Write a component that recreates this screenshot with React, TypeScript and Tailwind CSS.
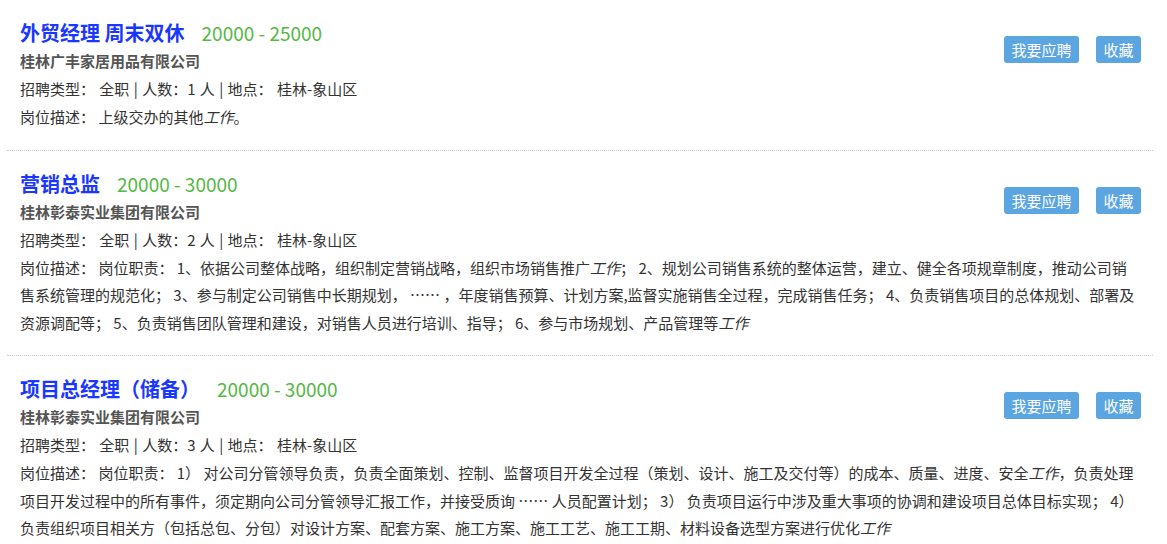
const jobs = [
  {
    title: '外贸经理 周末双休',
    salary: '20000 - 25000',
    company: '桂林广丰家居用品有限公司',
    count: 1,
    desc: [{ t: '上级交办的其他' }, { t: '工作', i: true }, { t: '。' }],
  },
  {
    title: '营销总监',
    salary: '20000 - 30000',
    company: '桂林彰泰实业集团有限公司',
    count: 2,
    desc: [
      { t: '岗位职责： 1、依据公司整体战略，组织制定营销战略，组织市场销售推广' },
      { t: '工作', i: true },
      {
        t: '； 2、规划公司销售系统的整体运营，建立、健全各项规章制度，推动公司销售系统管理的规范化； 3、参与制定公司销售中长期规划， …… ，年度销售预算、计划方案,监督实施销售全过程，完成销售任务； 4、负责销售项目的总体规划、部署及资源调配等； 5、负责销售团队管理和建设，对销售人员进行培训、指导； 6、参与市场规划、产品管理等',
      },
      { t: '工作', i: true },
    ],
  },
  {
    title: '项目总经理（储备）',
    salary: '20000 - 30000',
    company: '桂林彰泰实业集团有限公司',
    count: 3,
    desc: [
      { t: '岗位职责： 1） 对公司分管领导负责，负责全面策划、控制、监督项目开发全过程（策划、设计、施工及交付等）的成本、质量、进度、安全' },
      { t: '工作', i: true },
      {
        t: '，负责处理项目开发过程中的所有事件，须定期向公司分管领导汇报工作，并接受质询 …… 人员配置计划； 3） 负责项目运行中涉及重大事项的协调和建设项目总体目标实现； 4） 负责组织项目相关方（包括总包、分包）对设计方案、配套方案、施工方案、施工工艺、施工工期、材料设备选型方案进行优化',
      },
      { t: '工作', i: true },
    ],
  },
]

export default function App() {
  return (
    <div
      className="min-h-[544px] bg-white pl-[7px] pr-[14px] text-[15px] text-[#333]"
      style={{ fontFamily: '"Noto Sans CJK SC", sans-serif' }}
    >
      {jobs.map((job) => (
        <div key={job.title} className="border-b border-dotted border-[#c8c8c8] pt-[19px] pr-[12px] pb-[19px] pl-[13px]">
          <div className="float-right mt-[17px] flex gap-[17px]">
            <button className="h-[27px] w-[75px] rounded-[3px] bg-[#5ba5e1] text-[15px] leading-[27px] text-white">
              我要应聘
            </button>
            <button className="h-[27px] w-[45px] rounded-[3px] bg-[#5ba5e1] text-[15px] leading-[27px] text-white">
              收藏
            </button>
          </div>
          <div className="flex items-baseline text-[20px] leading-[28px]">
            <span className="font-bold text-[#1a37ff]">{job.title}</span>
            <span className="ml-[17px] text-[19px] text-[#55b846]">{job.salary}</span>
          </div>
          <div className="font-bold leading-[28px] text-[#555]">{job.company}</div>
          <div className="leading-[28px] [word-spacing:1px]">
            招聘类型： 全职 | 人数：{job.count} 人 | 地点： 桂林-象山区
          </div>
          <div className="leading-[27.5px]">
            岗位描述：{' '}
            {job.desc.map((d, k) =>
              d.i ? (
                <em key={k} className="italic">
                  {d.t}
                </em>
              ) : (
                <span key={k}>{d.t}</span>
              ),
            )}
          </div>
        </div>
      ))}
    </div>
  )
}
